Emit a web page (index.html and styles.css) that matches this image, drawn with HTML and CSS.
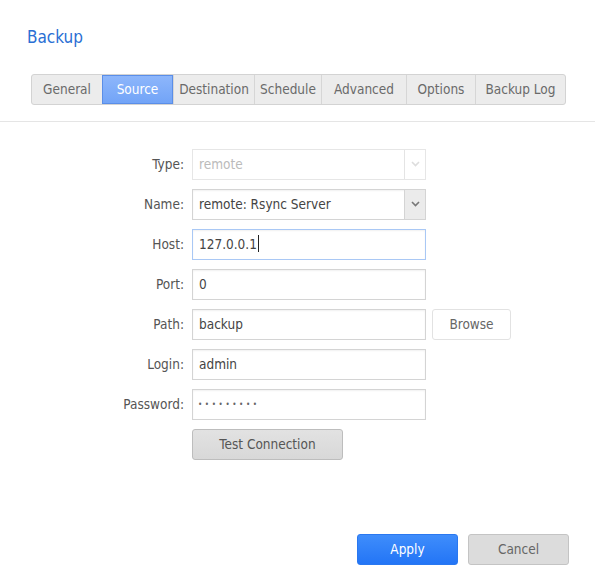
FILE: index.html
```html
<!DOCTYPE html>
<html>
<head>
<meta charset="utf-8">
<link rel="stylesheet" href="styles.css">
</head>
<body>
<div class="dialog">
  <h1 class="title">Backup</h1>
  <div class="tabs">
    <div class="tab t-general">General</div>
    <div class="tab t-source active">Source</div>
    <div class="tab t-dest">Destination</div>
    <div class="tab t-sched">Schedule</div>
    <div class="tab t-adv">Advanced</div>
    <div class="tab t-opt">Options</div>
    <div class="tab t-log">Backup Log</div>
  </div>
  <div class="sep"></div>
  <div class="form">
    <div class="row">
      <label>Type:</label>
      <div class="select disabled"><span class="val">remote</span><span class="arrow"><svg width="9" height="6" viewBox="0 0 9 6"><path d="M1 1 L4.5 4.5 L8 1" fill="none" stroke="#ddd" stroke-width="1.6"/></svg></span></div>
    </div>
    <div class="row">
      <label>Name:</label>
      <div class="select"><span class="val">remote: Rsync Server</span><span class="arrow grey"><svg width="9" height="6" viewBox="0 0 9 6"><path d="M1 1 L4.5 4.5 L8 1" fill="none" stroke="#777" stroke-width="1.6"/></svg></span></div>
    </div>
    <div class="row">
      <label>Host:</label>
      <div class="input focus">127.0.0.1<span class="caret"></span></div>
    </div>
    <div class="row">
      <label>Port:</label>
      <div class="input">0</div>
    </div>
    <div class="row">
      <label>Path:</label>
      <div class="input">backup</div>
      <div class="browse">Browse</div>
    </div>
    <div class="row">
      <label>Login:</label>
      <div class="input">admin</div>
    </div>
    <div class="row">
      <label>Password:</label>
      <div class="input pw">•••••••••</div>
    </div>
    <div class="row">
      <label></label>
      <div class="test">Test Connection</div>
    </div>
  </div>
  <div class="footer">
    <div class="btn apply">Apply</div>
    <div class="btn cancel">Cancel</div>
  </div>
</div>
</body>
</html>
```
FILE: styles.css
```css
* { box-sizing: border-box; }
html, body { margin: 0; padding: 0; background: #fff; }
body {
  font-family: "DejaVu Sans Condensed", "DejaVu Sans", sans-serif;
  font-size: 13.5px;
  color: #555;
  width: 595px;
  height: 571px;
  overflow: hidden;
}
.dialog { display: flex; flex-direction: column; height: 571px; }
.title {
  margin: 0;
  padding: 27px 0 0 27px;
  height: 74px;
  font-size: 17px;
  font-weight: normal;
  color: #2a6fd4;
  line-height: 20px;
}
.tabs {
  display: flex;
  margin-left: 31px;
  width: 535px;
  height: 31px;
  border: 1px solid #d3d3d3;
  border-radius: 3px;
  background: #ececec;
  overflow: hidden;
}
.tab {
  height: 29px;
  line-height: 29px;
  text-align: center;
  color: #6a6a6a;
  border-left: 1px solid #d6d6d6;
}
.tab:first-child { border-left: none; }
.t-general { width: 70px; }
.t-source { width: 71px; }
.t-dest { width: 81px; }
.t-sched { width: 67px; }
.t-adv { width: 85px; }
.t-opt { width: 69px; }
.t-log { flex: 1; }
.tab.active {
  background: linear-gradient(#8db6fb, #72a4f7);
  color: #fff;
  border: 1px solid #5a8ee8;
  height: 29px;
  line-height: 27px;
}
.sep { height: 1px; background: #e5e5e5; margin-top: 16px; }
.form { display: flex; flex-direction: column; gap: 10px; margin-top: 27px; }
.row { display: flex; align-items: center; height: 30px; }
.row label {
  width: 192px;
  text-align: right;
  padding-right: 8px;
  color: #555;
}
.input, .select {
  width: 234px;
  height: 31px;
  border: 1px solid #d4d4d4;
  line-height: 29px;
  padding-left: 6px;
  color: #444;
  background: #fff;
  box-shadow: inset 0 1px 2px rgba(0,0,0,0.06);
}
.input.focus { border-color: #a9c8f5; }
.caret { display: inline-block; width: 1px; height: 17px; background: #222; vertical-align: -3px; margin-left: 1px; }
.select { display: flex; padding-left: 0; }
.select .val { flex: 1; padding-left: 6px; }
.select.disabled { border-color: #e6e6e6; color: #bbb; box-shadow: none; }
.select .arrow {
  width: 21px;
  border-left: 1px solid #e4e4e4;
  display: flex; align-items: center; justify-content: center;
}
.select .arrow.grey { background: #ebebeb; border-left-color: #d4d4d4; }
.pw { letter-spacing: 2.6px; font-size: 8px; color: #666; padding-left: 5px; }
.browse {
  margin-left: 6px;
  width: 79px;
  height: 31px;
  line-height: 29px;
  border: 1px solid #e2e2e2;
  border-radius: 3px;
  text-align: center;
  color: #666;
  background: #fff;
}
.test {
  width: 151px;
  height: 31px;
  line-height: 29px;
  border: 1px solid #bdbdbd;
  border-radius: 3px;
  background: linear-gradient(#e2e2e2, #d8d8d8);
  text-align: center;
  color: #555;
}
.footer { display: flex; gap: 10px; margin-top: auto; margin-bottom: 6px; padding-left: 357px; }
.btn {
  width: 101px;
  height: 31px;
  line-height: 29px;
  border-radius: 3px;
  text-align: center;
}
.apply { background: linear-gradient(#3f8dfb, #2375f6); color: #fff; border: 1px solid #2a78f0; }
.cancel { background: #dcdcdc; color: #666; border: 1px solid #c4c4c4; }
```
